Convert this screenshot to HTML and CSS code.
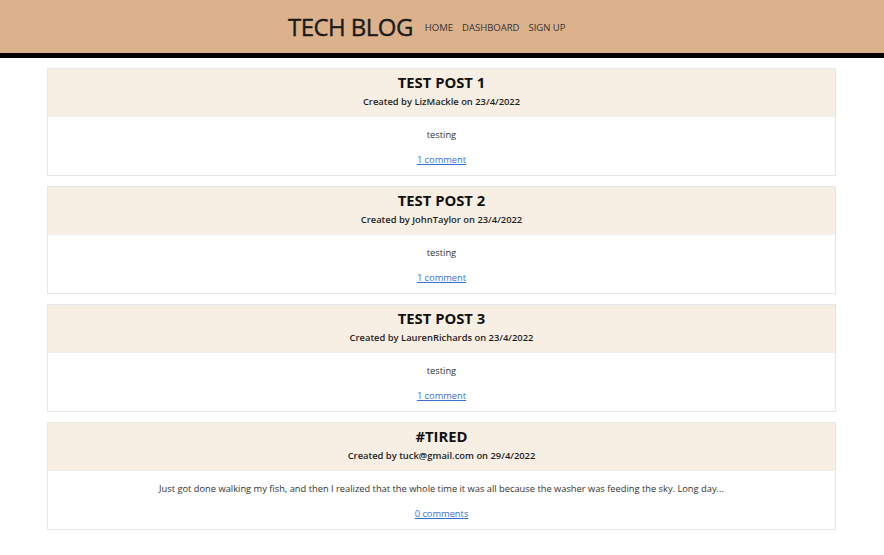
FILE: index.html
```html
<!DOCTYPE html>
<html>
<head>
<meta charset="utf-8">
<link rel="stylesheet" href="styles.css">
</head>
<body>
<header class="site-header">
  <div class="header-inner">
    <h1 class="brand">TECH BLOG</h1>
    <nav class="nav">
      <a href="#">HOME</a>
      <a href="#">DASHBOARD</a>
      <a href="#">SIGN UP</a>
    </nav>
  </div>
</header>
<main class="posts">
  <article class="card">
    <div class="card-head">
      <h2 class="title">TEST POST 1</h2>
      <p class="meta">Created by LizMackle on 23/4/2022</p>
    </div>
    <div class="card-body">
      <p class="content">testing</p>
      <a class="comments" href="#">1 comment</a>
    </div>
  </article>
  <article class="card">
    <div class="card-head">
      <h2 class="title">TEST POST 2</h2>
      <p class="meta">Created by JohnTaylor on 23/4/2022</p>
    </div>
    <div class="card-body">
      <p class="content">testing</p>
      <a class="comments" href="#">1 comment</a>
    </div>
  </article>
  <article class="card">
    <div class="card-head">
      <h2 class="title">TEST POST 3</h2>
      <p class="meta">Created by LaurenRichards on 23/4/2022</p>
    </div>
    <div class="card-body">
      <p class="content">testing</p>
      <a class="comments" href="#">1 comment</a>
    </div>
  </article>
  <article class="card">
    <div class="card-head">
      <h2 class="title">#TIRED</h2>
      <p class="meta">Created by tuck@gmail.com on 29/4/2022</p>
    </div>
    <div class="card-body">
      <p class="content">Just got done walking my fish, and then I realized that the whole time it was all because the washer was feeding the sky. Long day...</p>
      <a class="comments" href="#">0 comments</a>
    </div>
  </article>
</main>
</body>
</html>
```
FILE: styles.css
```css
* { box-sizing: border-box; }
html, body { margin: 0; padding: 0; }
body {
  font-family: "Open Sans", "Noto Sans", sans-serif;
  color: #222;
  background: #fff;
}
.site-header {
  background: #dcb28c;
  border-bottom: 5px solid #000;
  height: 58px;
}
.header-inner {
  display: flex;
  align-items: center;
  padding-left: 288px;
  height: 53px;
  gap: 12px;
}
.brand {
  margin: 0;
  font-size: 24px;
  font-weight: 400;
  color: #1a1a1a;
  line-height: 30px;
  letter-spacing: -0.55px;
  -webkit-text-stroke: 0.35px #1a1a1a;
}
.nav {
  display: flex;
  gap: 9px;
  padding-top: 1px;
}
.nav a {
  color: #333;
  text-decoration: none;
  font-size: 9.5px;
}
.posts {
  display: flex;
  flex-direction: column;
  gap: 10px;
  padding: 10px 48px 0 47px;
}
.card {
  border: 1px solid #e6e6e6;
  text-align: center;
}
.card-head {
  background: #f7efe3;
  height: 48px;
  padding-top: 3px;
  border-bottom: 1px solid #eeeeee;
}
.title {
  margin: 0;
  font-size: 14.8px;
  font-weight: 700;
  line-height: 20px;
  color: #111;
}
.meta {
  margin: 3px 0 0;
  font-size: 9.4px;
  font-weight: 600;
  line-height: 14px;
  color: #1e1e1e;
}
.card-body {
  height: 58px;
  padding-top: 11px;
}
.content {
  margin: 0;
  font-size: 9.3px;
  line-height: 14px;
  color: #333;
}
.comments {
  display: inline-block;
  margin-top: 11px;
  font-size: 9.3px;
  line-height: 14px;
  color: #3b6fd8;
}
```
